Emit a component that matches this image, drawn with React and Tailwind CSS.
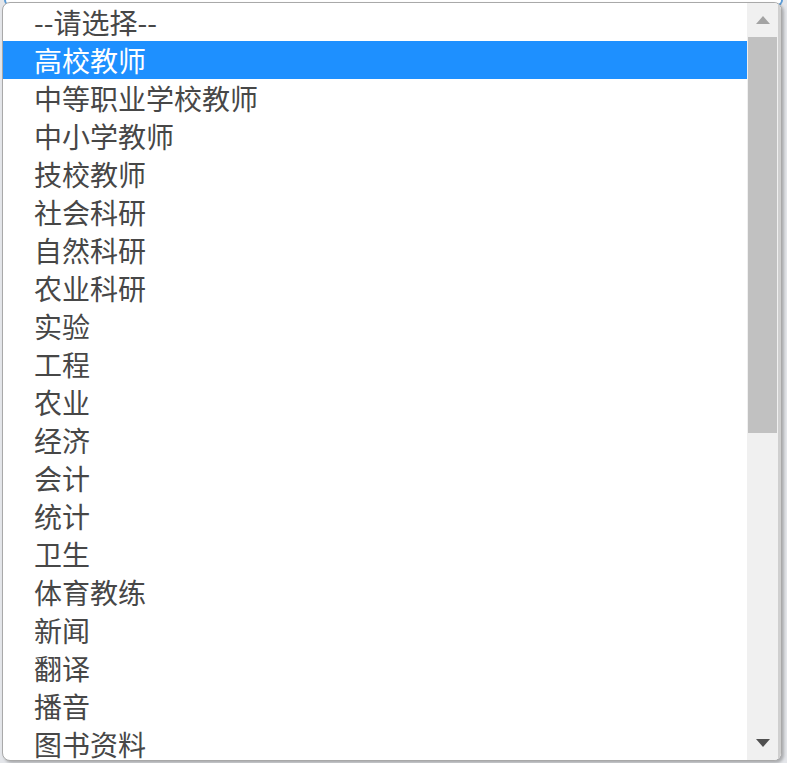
import React from 'react';

const options = [
  '--请选择--',
  '高校教师',
  '中等职业学校教师',
  '中小学教师',
  '技校教师',
  '社会科研',
  '自然科研',
  '农业科研',
  '实验',
  '工程',
  '农业',
  '经济',
  '会计',
  '统计',
  '卫生',
  '体育教练',
  '新闻',
  '翻译',
  '播音',
  '图书资料',
];

export default function App() {
  const selected = 1;

  return (
    <div className="relative w-[787px] h-[763px] overflow-hidden bg-[#e4e6ea] font-['Noto_Sans_CJK_SC','Noto_Sans',sans-serif]">
      {/* input behind the popup */}
      <div className="mx-[4px] h-[6px] rounded-b-[6px] border-b-2 border-x-2 border-[#5b9bd5] bg-white" />

      {/* dropdown popup */}
      <div className="absolute left-[2px] top-[2px] w-[780px] h-[759px] flex rounded-[8px] border border-[#a9a9a9] bg-white overflow-hidden shadow-[2px_2px_3px_rgba(0,0,0,0.25)]">
        <ul className="flex-1 overflow-hidden">
          {options.map((opt, i) => (
            <li
              key={opt}
              className={`h-[38px] flex items-center pl-[31px] text-[28px] leading-none ${
                i === selected ? 'bg-[#1e90ff] text-white' : 'text-[#474747]'
              }`}
            >
              {opt}
            </li>
          ))}
        </ul>

        {/* scrollbar */}
        <div className="w-[34px] flex flex-col bg-[#f0f0f0] border-r-[3px] border-[#cfcfcf]">
          <div className="h-[34px] flex items-center justify-center">
            <svg width="16" height="10" viewBox="0 0 16 10">
              <polygon points="8,1 15,9 1,9" fill="#a3a3a3" />
            </svg>
          </div>
          <div className="mx-[1px] h-[396px] bg-[#c1c1c1]" />
          <div className="flex-1" />
          <div className="h-[34px] flex items-center justify-center">
            <svg width="16" height="10" viewBox="0 0 16 10">
              <polygon points="1,1 15,1 8,9" fill="#505050" />
            </svg>
          </div>
        </div>
      </div>
    </div>
  );
}
